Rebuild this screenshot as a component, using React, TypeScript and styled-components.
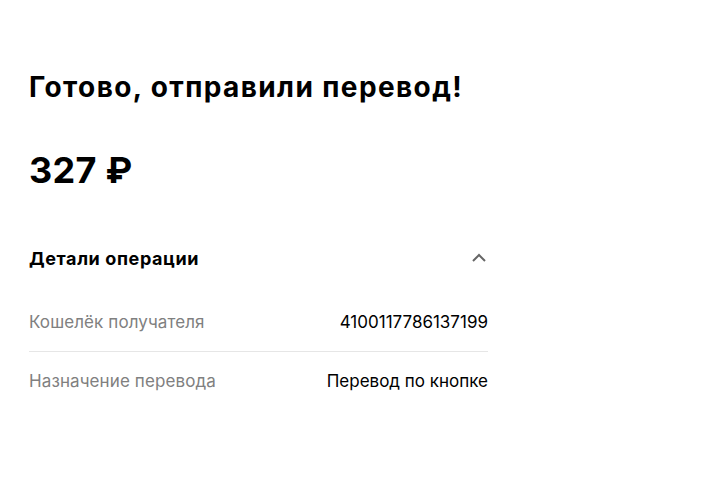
import React from "react";
import styled, { createGlobalStyle } from "styled-components";

const Global = createGlobalStyle`
  html, body { margin: 0; padding: 0; background: #fff; }
  body { font-family: Inter, "Noto Sans", sans-serif; color: #000; }
`;

const Page = styled.main`
  width: 459px;
  padding: 67px 0 0 29px;
  display: flex;
  flex-direction: column;
`;

const Title = styled.h1`
  margin: 0;
  font-size: 28px;
  line-height: 40px;
  font-weight: 700;
  letter-spacing: 1.4px;
`;

const Amount = styled.div`
  margin-top: 39px;
  font-size: 36px;
  line-height: 48px;
  font-weight: 700;
  letter-spacing: 0.3px;
`;

const SectionHeader = styled.button`
  margin-top: 50px;
  display: flex;
  align-items: center;
  justify-content: space-between;
  background: none;
  border: 0;
  padding: 0;
  font: inherit;
  font-size: 18px;
  font-weight: 700;
  letter-spacing: 0.6px;
  color: #000;
  height: 28px;
`;

const List = styled.div`
  margin-top: 21px;
  display: flex;
  flex-direction: column;
`;

const Row = styled.div<{ $divider?: boolean }>`
  display: flex;
  justify-content: space-between;
  align-items: center;
  height: 58px;
  font-size: 17px;
  border-bottom: ${(p) => (p.$divider ? "1px solid #e6e6e6" : "none")};
`;

const Label = styled.span`
  color: #808080;
  letter-spacing: 0.1px;
`;

const Value = styled.span`
  color: #000;
`;

export default function App() {
  return (
    <>
      <Global />
      <Page>
        <Title>Готово, отправили перевод!</Title>
        <Amount>327 ₽</Amount>
        <SectionHeader>
          <span>Детали операции</span>
          <svg width="16" height="10" viewBox="0 0 16 10" style={{ marginRight: 1 }}>
            <path d="M2 8 L8 2 L14 8" fill="none" stroke="#666" strokeWidth="2" />
          </svg>
        </SectionHeader>
        <List>
          <Row $divider>
            <Label>Кошелёк получателя</Label>
            <Value>4100117786137199</Value>
          </Row>
          <Row>
            <Label>Назначение перевода</Label>
            <Value>Перевод по кнопке</Value>
          </Row>
        </List>
      </Page>
    </>
  );
}
